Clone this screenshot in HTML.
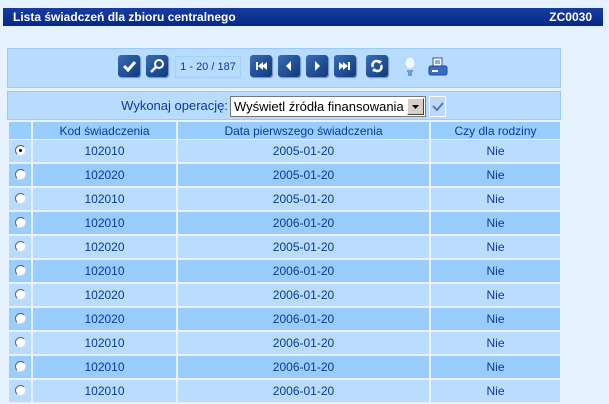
<!DOCTYPE html>
<html><head><meta charset="utf-8"><style>
*{margin:0;padding:0;box-sizing:border-box}
body{width:609px;height:404px;background:#e6f3fe;font-family:"Liberation Sans",sans-serif;font-size:12px;color:#0a3a9a;position:relative;overflow:hidden;white-space:nowrap}
.hdr{position:absolute;left:3px;top:8px;width:600px;height:18px;background:linear-gradient(#1a3ca0,#022a88);color:#fff;font:bold 12px "Liberation Sans",sans-serif;line-height:18px}
.hdr .l{position:absolute;left:10px}.hdr .r{position:absolute;right:11px}
.box{position:absolute;left:7px;width:554px;background:#b8dcff;border:1px solid #9ccaf4}
.btn{position:absolute;top:55px;width:22px;height:22px;border-radius:3px;background:linear-gradient(135deg,#3a6bb0,#0c3a7e);box-shadow:1px 1px 1px #6a8cb8;}
.btn svg{position:absolute;left:0;top:0}
.cnt{position:absolute;left:175px;top:56px;width:66px;height:22px;border:1px solid #a6d0f6;color:#0a3a9a;text-align:center;line-height:20px;font-size:11px}
table{position:absolute;left:9px;top:122px;border-collapse:separate;border-spacing:2px 0;margin-left:-2px}
td{height:24px;text-align:center;border-bottom:2px solid #e6f3fe;font-size:12px}
tr.h td{height:18px;background:#99ccff;border-bottom:1px solid #e6f3fe}
tr.a td{background:#b9dcff}tr.b td{background:#99ccff}
.rad{display:inline-block;width:11px;height:11px;border-radius:50%;background:#fff;border:1px solid #666;border-right-color:#ddd;border-bottom-color:#ddd;position:relative;top:1px}
.rad.on:after{content:"";position:absolute;left:3px;top:3px;width:3px;height:3px;border-radius:50%;background:#000}
</style></head><body>
<div class="hdr"><span class="l">Lista świadczeń dla zbioru centralnego</span><span class="r">ZC0030</span></div>
<div class="box" style="top:48px;height:40px"></div>
<div class="box" style="top:91px;height:29px"></div>
<div class="btn" style="left:118px"><svg width="22" height="22"><path d="M6 11l4 4 7-8" stroke="#fff" stroke-width="3" fill="none"/></svg></div>
<div class="btn" style="left:146px"><svg width="22" height="22"><circle cx="13" cy="9" r="4" stroke="#fff" stroke-width="2" fill="none"/><path d="M10 12l-5 5" stroke="#fff" stroke-width="2.5"/></svg></div>
<div class="cnt">1 - 20 / 187</div>
<div class="btn" style="left:250px"><svg width="22" height="22"><path d="M6 7h2v8H6zM8 11l5-4v8zM12 11l5-4v8z" fill="#fff"/></svg></div>
<div class="btn" style="left:278px"><svg width="22" height="22"><path d="M8 11l5-5v10z" fill="#fff"/></svg></div>
<div class="btn" style="left:306px"><svg width="22" height="22"><path d="M9 6l5 5-5 5z" fill="#fff"/></svg></div>
<div class="btn" style="left:334px"><svg width="22" height="22"><path d="M5 7l5 4-5 4zM9 7l5 4-5 4zM14 7h2v8h-2z" fill="#fff"/></svg></div>
<div class="btn" style="left:366px"><svg width="22" height="22"><path d="M7 12a4 4 0 0 1 7-4M15 10a4 4 0 0 1-7 4" stroke="#fff" stroke-width="2.5" fill="none"/><path d="M12 5l4 1-2 3zM10 17l-4-1 2-3z" fill="#fff"/></svg></div>
<svg style="position:absolute;left:402px;top:55px" width="16" height="24"><ellipse cx="8" cy="8" rx="5" ry="6" fill="#eef8ff" stroke="#b8d8f0"/><path d="M5 16h6M6 18h4M6 20h4" stroke="#2a5aa8"/></svg>
<svg style="position:absolute;left:428px;top:57px" width="20" height="22"><rect x="5" y="1" width="9" height="9" fill="#fff" stroke="#2a5aa8"/><path d="M7 4h5M7 6h5" stroke="#2a5aa8"/><rect x="1" y="9" width="18" height="9" rx="2" fill="#3b6cc0" stroke="#1a4a98"/><rect x="4" y="13" width="6" height="2" fill="#fff"/></svg>
<div style="position:absolute;left:98px;top:98px;width:130px;text-align:right;font-size:13px;color:#0a3a9a">Wykonaj operację:</div>
<div style="position:absolute;left:230px;top:96px;width:196px;height:21px;background:#fff;border:1px solid #777;font-size:13px;color:#000;line-height:19px;padding-left:3px;overflow:hidden">Wyświetl źródła finansowania
<div style="position:absolute;right:1px;top:1px;width:17px;height:17px;background:#d4d0c8;border:1px solid;border-color:#fff #404040 #404040 #fff"><svg width="15" height="15" style="position:absolute;left:0;top:0"><path d="M4 6h7l-3.5 4z" fill="#000"/></svg></div></div>
<div style="position:absolute;left:429px;top:96px;width:17px;height:21px;background:#c0d8f6;border:1px solid #fff"><svg width="15" height="19"><path d="M3 9l4 4 6-7" stroke="#5a7ab0" stroke-width="2" fill="none"/></svg></div>
<table>
<tr class="h"><td style="width:22px"></td><td style="width:143px">Kod świadczenia</td><td style="width:251px">Data pierwszego świadczenia</td><td style="width:129px">Czy dla rodziny</td></tr>
<tr class="a"><td><span class="rad on"></span></td><td>102010</td><td>2005-01-20</td><td>Nie</td></tr>
<tr class="b"><td><span class="rad"></span></td><td>102020</td><td>2005-01-20</td><td>Nie</td></tr>
<tr class="a"><td><span class="rad"></span></td><td>102010</td><td>2005-01-20</td><td>Nie</td></tr>
<tr class="b"><td><span class="rad"></span></td><td>102010</td><td>2006-01-20</td><td>Nie</td></tr>
<tr class="a"><td><span class="rad"></span></td><td>102020</td><td>2005-01-20</td><td>Nie</td></tr>
<tr class="b"><td><span class="rad"></span></td><td>102010</td><td>2006-01-20</td><td>Nie</td></tr>
<tr class="a"><td><span class="rad"></span></td><td>102020</td><td>2006-01-20</td><td>Nie</td></tr>
<tr class="b"><td><span class="rad"></span></td><td>102020</td><td>2006-01-20</td><td>Nie</td></tr>
<tr class="a"><td><span class="rad"></span></td><td>102010</td><td>2006-01-20</td><td>Nie</td></tr>
<tr class="b"><td><span class="rad"></span></td><td>102010</td><td>2006-01-20</td><td>Nie</td></tr>
<tr class="a"><td><span class="rad"></span></td><td>102010</td><td>2006-01-20</td><td>Nie</td></tr>
</table>
</body></html>
